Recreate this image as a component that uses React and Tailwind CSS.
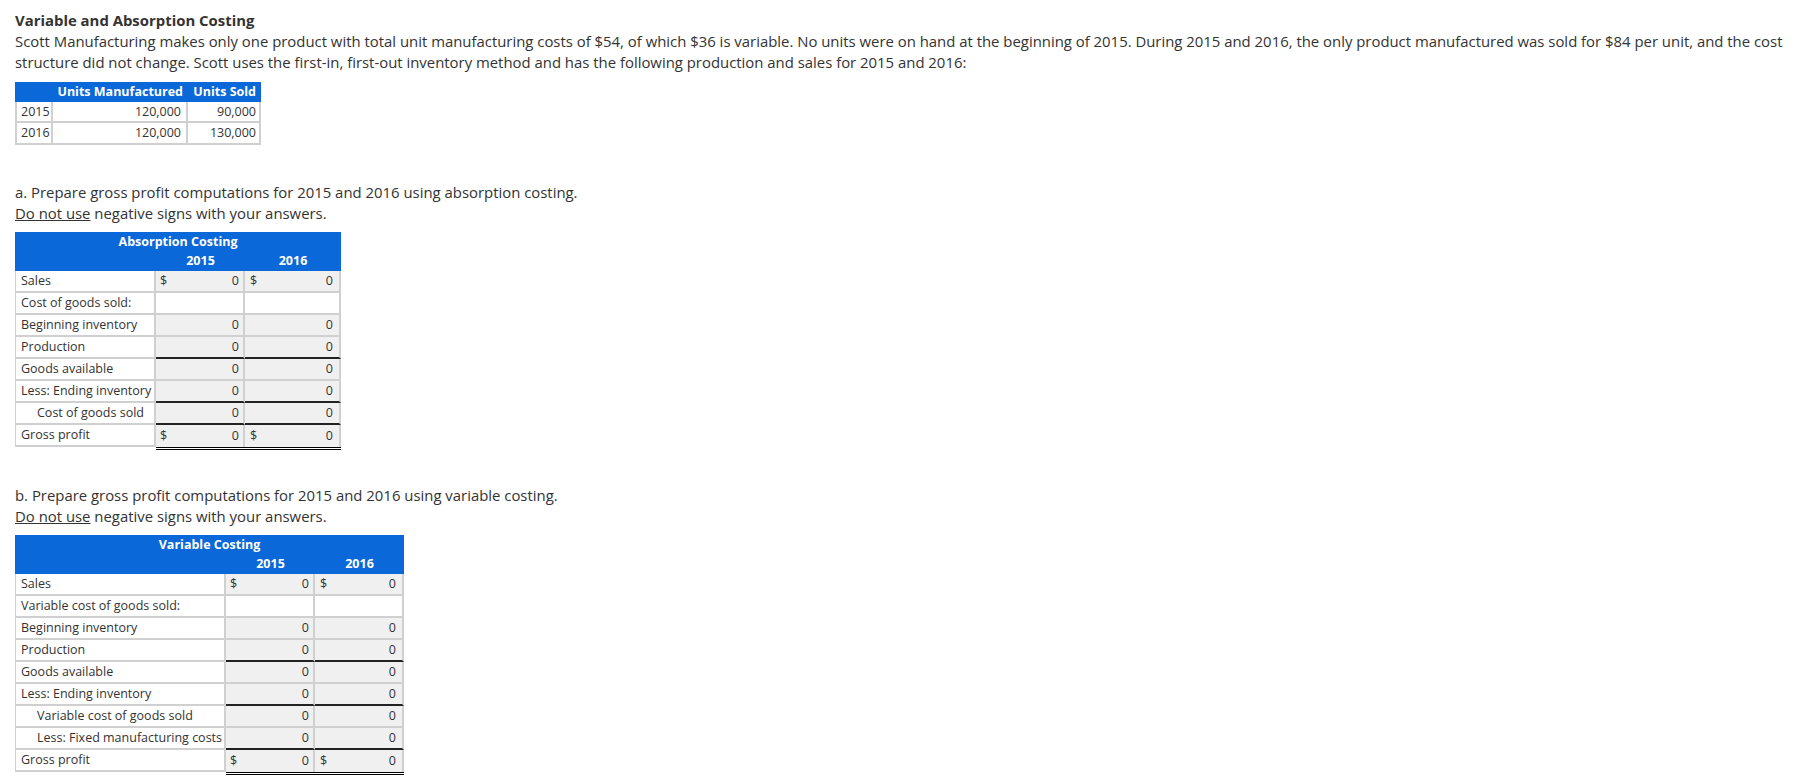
import React from "react";

function CostTable({ title, labelW, c2W, c3W, totalW, dblW, rows }) {
  return (
    <div className={`${totalW} text-[12.5px] leading-[16px] text-[#333]`}>
      <div className="bg-[#0a68d8] text-white font-bold">
        <div className="h-[19px] flex items-center justify-center">{title}</div>
        <div className="h-[20px] flex items-center">
          <div className={labelW}></div>
          <div className={`${c2W} text-center`}>2015</div>
          <div className={`${c3W} text-center`}>2016</div>
        </div>
      </div>
      {rows.map((r, i) => {
        const bottom = r.last
          ? "border-b-0"
          : r.black
          ? "border-b-2 border-b-[#222]"
          : "border-b-2 border-b-[#d0d0d0]";
        const fill = r.kind === "blank" ? "bg-white" : "bg-[#f0f0f0]";
        const content =
          r.kind === "money" ? (
            <>
              <span>$</span>
              <span>0</span>
            </>
          ) : r.kind === "num" ? (
            <span>0</span>
          ) : null;
        const just = r.kind === "money" ? "justify-between" : "justify-end";
        return (
          <div key={i} className="flex h-[22px]">
            <div
              className={`${labelW} flex items-center border-l border-r-2 border-b-2 border-[#d0d0d0] ${
                r.indent ? "pl-[21px]" : "pl-[5px]"
              } whitespace-nowrap`}
            >
              {r.label}
            </div>
            <div
              className={`${c2W} flex items-center ${just} ${fill} border-r-2 border-r-[#d0d0d0] ${bottom} pl-[4px] pr-[4px]`}
            >
              {content}
            </div>
            <div
              className={`${c3W} flex items-center ${just} ${fill} border-r-2 border-r-[#d0d0d0] ${bottom} pl-[5px] pr-[6px]`}
            >
              {content}
            </div>
          </div>
        );
      })}
      <div className="flex">
        <div className={labelW}></div>
        <div className={`${dblW} h-[3px] border-t border-b border-black`}></div>
      </div>
    </div>
  );
}

const absRows = [
  { label: "Sales", kind: "money" },
  { label: "Cost of goods sold:", kind: "blank" },
  { label: "Beginning inventory", kind: "num" },
  { label: "Production", kind: "num", black: true },
  { label: "Goods available", kind: "num" },
  { label: "Less: Ending inventory", kind: "num", black: true },
  { label: "Cost of goods sold", kind: "num", indent: true, black: true },
  { label: "Gross profit", kind: "money", last: true },
];

const varRows = [
  { label: "Sales", kind: "money" },
  { label: "Variable cost of goods sold:", kind: "blank" },
  { label: "Beginning inventory", kind: "num" },
  { label: "Production", kind: "num", black: true },
  { label: "Goods available", kind: "num" },
  { label: "Less: Ending inventory", kind: "num", black: true },
  { label: "Variable cost of goods sold", kind: "num", indent: true },
  { label: "Less: Fixed manufacturing costs", kind: "num", indent: true, black: true },
  { label: "Gross profit", kind: "money", last: true },
];

function UnitsTable() {
  const rows = [
    ["2015", "120,000", "90,000"],
    ["2016", "120,000", "130,000"],
  ];
  return (
    <div className="mt-[9px] w-[246px] text-[12.5px] leading-[16px] text-[#333]">
      <div className="flex h-[20px] items-center bg-[#0a68d8] text-white font-bold whitespace-nowrap">
        <div className="w-[38px]"></div>
        <div className="w-[135px] text-right pr-[5px]">Units Manufactured</div>
        <div className="w-[73px] text-right pr-[5px]">Units Sold</div>
      </div>
      {rows.map((r, i) => (
        <div
          key={i}
          className={`flex ${i === 0 ? "h-[21px]" : "h-[22px]"} border-l-2 border-r-2 border-b-2 border-[#d0d0d0]`}
        >
          <div className="w-[36px] flex items-center pl-[4px] border-r-2 border-[#d0d0d0]">{r[0]}</div>
          <div className="w-[135px] flex items-center justify-end pr-[5px] border-r-2 border-[#d0d0d0]">{r[1]}</div>
          <div className="flex-1 flex items-center justify-end pr-[3px]">{r[2]}</div>
        </div>
      ))}
    </div>
  );
}

export default function App() {
  return (
    <div className="min-h-[783px] bg-white font-['Open_Sans',sans-serif] text-[14.9px] leading-[21px] text-[#333] pl-[15px] pr-[6px] pt-[10px]">
      <div className="font-bold">Variable and Absorption Costing</div>
      <p>
        Scott Manufacturing makes only one product with total unit manufacturing costs of $54, of which $36 is
        variable. No units were on hand at the beginning of 2015. During 2015 and 2016, the only product
        manufactured was sold for $84 per unit, and the cost structure did not change. Scott uses the first-in,
        first-out inventory method and has the following production and sales for 2015 and 2016:
      </p>
      <UnitsTable />

      <div className="mt-[37px]">a. Prepare gross profit computations for 2015 and 2016 using absorption costing.</div>
      <div>
        <span className="underline">Do not use</span> negative signs with your answers.
      </div>
      <div className="mt-[8px]">
        <CostTable
          title="Absorption Costing"
          totalW="w-[326px]"
          labelW="w-[141px]"
          c2W="w-[89px]"
          c3W="w-[96px]"
          dblW="w-[185px]"
          rows={absRows}
        />
      </div>

      <div className="mt-[35px]">b. Prepare gross profit computations for 2015 and 2016 using variable costing.</div>
      <div>
        <span className="underline">Do not use</span> negative signs with your answers.
      </div>
      <div className="mt-[8px]">
        <CostTable
          title="Variable Costing"
          totalW="w-[389px]"
          labelW="w-[211px]"
          c2W="w-[89px]"
          c3W="w-[89px]"
          dblW="w-[178px]"
          rows={varRows}
        />
      </div>
    </div>
  );
}
